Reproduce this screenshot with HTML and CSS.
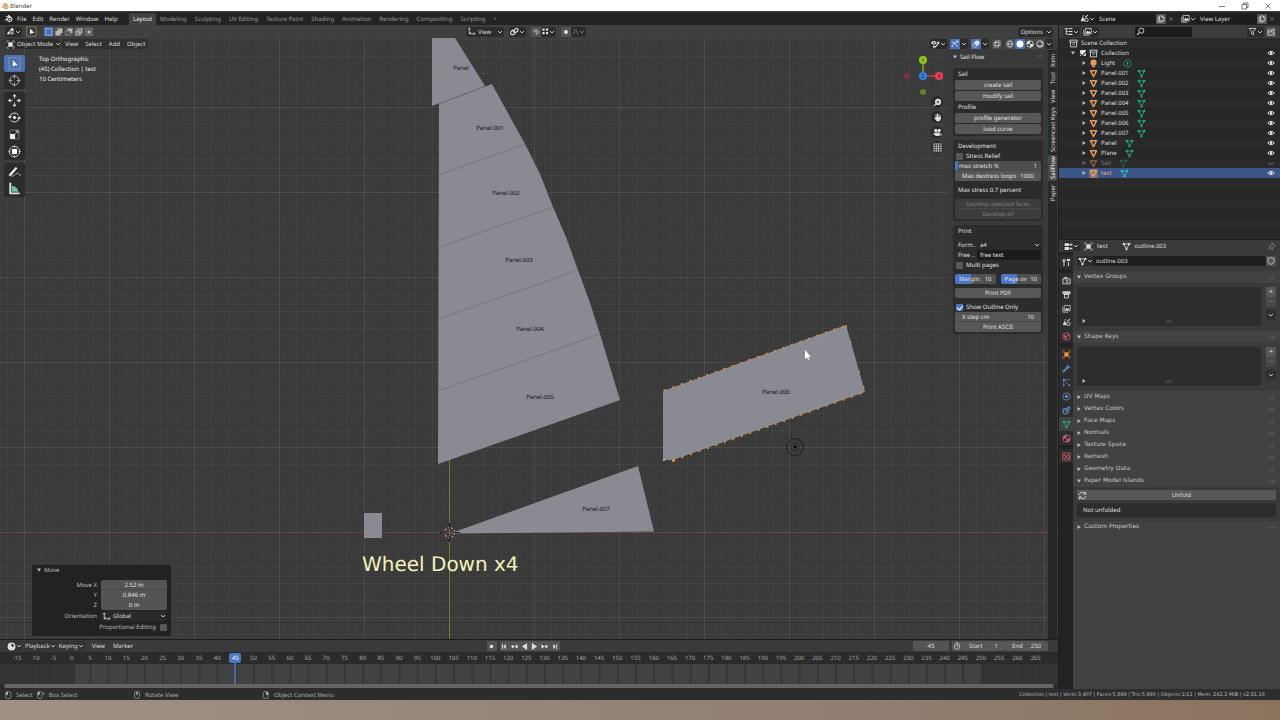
FILE: index.html
```html
<!DOCTYPE html>
<html lang="en">
<head>
<meta charset="utf-8">
<title>Blender</title>
<link rel="stylesheet" href="styles.css">
</head>
<body>
<svg class="defs" aria-hidden="true">
  <defs>
    <symbol id="blender" viewBox="0 0 16 16"><path d="M1 11 7.500 5.500H3V4h5L6.500 2.700 8 1.500l5.500 4.300C17 9 14.500 14 10 14c-3 0-5-2-5-4.200L2.500 12z" fill="currentColor"/><circle cx="10" cy="9.500" r="3" fill="var(--hole,#232323)"/><circle cx="10" cy="9.500" r="1.600" fill="var(--pupil,currentColor)"/></symbol>
    <symbol id="chev" viewBox="0 0 8 8"><path d="m1.500 2.800 2.500 2.500 2.500-2.500" fill="none" stroke="currentColor" stroke-width="1.200"/></symbol>
    <symbol id="down" viewBox="0 0 8 8"><path d="M0 1h8L4 7.500z" fill="currentColor"/></symbol>
    <symbol id="right" viewBox="0 0 8 8"><path d="M1 0v8l6.500-4z" fill="currentColor"/></symbol>
    <symbol id="mesh" viewBox="0 0 16 16"><g fill="none" stroke="currentColor" stroke-width="1.500"><path d="M3 3.500h10L8 12.500z"/></g><g fill="currentColor"><circle cx="3" cy="3.500" r="2"/><circle cx="13" cy="3.500" r="2"/><circle cx="8" cy="13" r="2"/></g></symbol>
    <symbol id="tri" viewBox="0 0 16 16"><path d="M2.500 3h11L8 13.500z" fill="none" stroke="currentColor" stroke-width="2.600" stroke-linejoin="round"/></symbol>
    <symbol id="bulb" viewBox="0 0 16 16"><circle cx="8" cy="6.500" r="5.500" fill="currentColor"/><path d="M5.500 12h5v2.500h-5z" fill="currentColor"/></symbol>
    <symbol id="point" viewBox="0 0 16 16"><circle cx="8" cy="8" r="6.500" fill="none" stroke="currentColor" stroke-width="1.500" stroke-dasharray="4 1"/><circle cx="8" cy="8" r="1.800" fill="currentColor"/><path d="M8 4v8" stroke="currentColor"/></symbol>
    <symbol id="box" viewBox="0 0 16 16"><path d="M1.500 2h13v3.500h-13zM2.500 5.500V14h11V5.500M6 9h4" fill="none" stroke="currentColor" stroke-width="1.500"/></symbol>
    <symbol id="eye" viewBox="0 0 16 16"><path d="M1.500 8Q8 1 14.500 8 8 15 1.500 8z" fill="none" stroke="currentColor" stroke-width="2"/><circle cx="8" cy="8" r="2.500" fill="currentColor"/></symbol>
    <symbol id="lid" viewBox="0 0 16 16"><path d="M2 7q6 6 12 0M4 9l-1 2M8 10v2M12 9l1 2" fill="none" stroke="currentColor" stroke-width="1.300"/></symbol>
    <symbol id="object" viewBox="0 0 16 16"><path d="M4 4h8v8H4z" fill="currentColor"/><path d="M1.500 5V1.500H5M11 1.500h3.500V5M14.500 11v3.500H11M5 14.500H1.500V11" fill="none" stroke="currentColor"/></symbol>
    <symbol id="view3d" viewBox="0 0 16 16"><path d="M2 12h12M5 12l3-8M11 13l2-5M4 9h8" stroke="currentColor" stroke-width="1.300" fill="none"/><circle cx="11" cy="4.500" r="2.800" fill="currentColor"/><circle cx="4.500" cy="11" r="2" fill="currentColor"/></symbol>
    <symbol id="selbox" viewBox="0 0 16 16"><path d="M1 1h14v14H1z" fill="none" stroke="#c9a052" stroke-width="1.100" stroke-dasharray="2 1.200"/><path d="M6 4v8l2.200-2H12z" fill="#fff"/></symbol>
    <symbol id="copy" viewBox="0 0 16 16"><path d="M5 2h6l3 3v7H5zM11 2v3.500h3M5 4.500H2V14h8v-2" fill="none" stroke="currentColor" stroke-width="1.500"/></symbol>
    <symbol id="image" viewBox="0 0 16 16"><path d="M1.500 5v9.500H11M4 3v9h10.500V2.500H4z" fill="none" stroke="currentColor" stroke-width="1.400"/><path d="m5 11 3-5 2.500 3 1.500-2 2 4z" fill="currentColor"/></symbol>
    <symbol id="scene" viewBox="0 0 16 16"><path d="M5 4l4 9H1z" fill="currentColor"/><circle cx="11.500" cy="10.500" r="3" fill="none" stroke="currentColor" stroke-width="1.500"/><path d="M9 6l5-4M5 3h2" stroke="currentColor" stroke-width="2"/></symbol>
    <symbol id="x" viewBox="0 0 16 16"><path d="m3 3 10 10M13 3 3 13" stroke="currentColor" stroke-width="2"/></symbol>
    <symbol id="axes" viewBox="0 0 16 16"><path d="M4 2v10h10M4 12l3-3M2 4l2-2.500L6 4M12 10l2.500 2L12 14" fill="none" stroke="currentColor" stroke-width="1.400"/></symbol>
    <symbol id="link" viewBox="0 0 16 16"><path d="m5 8 5-5q3-2 4 1t-2 4l-5 5q-3 2-5 0t0-5l4-3" fill="none" stroke="currentColor" stroke-width="2"/><circle cx="7.500" cy="8.500" r="2" fill="currentColor"/></symbol>
    <symbol id="magnet" viewBox="0 0 16 16"><path d="M3 6Q8 0 12 5t-4 8M5 8q3-3 5-1t-3 4M2.500 5l3 3.500" fill="none" stroke="currentColor" stroke-width="1.200"/></symbol>
    <symbol id="dots4" viewBox="0 0 16 16"><path d="M1 1h5v5H1zM9 1h5v5H9zM1 9h5v5H1zM9 9h5v5H9z" fill="currentColor"/></symbol>
    <symbol id="dot" viewBox="0 0 16 16"><circle cx="8" cy="8" r="4" fill="currentColor"/></symbol>
    <symbol id="curve" viewBox="0 0 16 16"><path d="M1 14q4 0 5-8 2-8 4 0 1 8 5 8" fill="none" stroke="currentColor" stroke-width="1.500"/></symbol>
    <symbol id="gizmo" viewBox="0 0 16 16"><path d="M2 14Q4 5 14 2M2 4q8 1 11 10M10 2h4v4" fill="none" stroke="currentColor" stroke-width="1.600"/></symbol>
    <symbol id="overlay" viewBox="0 0 16 16"><circle cx="10" cy="6" r="5" fill="currentColor"/><circle cx="6" cy="10" r="4.700" fill="none" stroke="currentColor" stroke-width="1.400"/></symbol>
    <symbol id="xray" viewBox="0 0 16 16"><path d="M2 5h9v9H2zM5 2h9v9H5z" fill="none" stroke="currentColor" stroke-width="1.300"/></symbol>
    <symbol id="globe" viewBox="0 0 16 16"><g fill="none" stroke="currentColor" stroke-width="1.200"><circle cx="8" cy="8" r="6.500"/><ellipse cx="8" cy="8" rx="3" ry="6.500"/><path d="M1.500 8h13"/></g></symbol>
    <symbol id="ball" viewBox="0 0 16 16"><circle cx="8" cy="8" r="7" fill="#fff"/></symbol>
    <symbol id="matball" viewBox="0 0 16 16"><circle cx="8" cy="8" r="6.500" fill="none" stroke="currentColor" stroke-width="1.600"/><path d="M8 1.500A6.500 6.500 0 0 0 1.500 8H8zM8 8v6.500A6.500 6.500 0 0 0 14.500 8z" fill="currentColor"/></symbol>
    <symbol id="rendball" viewBox="0 0 16 16"><circle cx="8" cy="8" r="6.500" fill="none" stroke="currentColor" stroke-width="1.600"/><path d="M9 3q4 1 4 5M3 11q5 4 10-1" fill="none" stroke="currentColor" stroke-width="2"/></symbol>
    <symbol id="visib" viewBox="0 0 16 16"><path d="M1 5q4-4 8 0-4 4-8 0zM7 13l7-8" fill="none" stroke="currentColor" stroke-width="2"/><circle cx="13" cy="4.500" r="2" fill="currentColor"/><path d="M4 9v6l4-3z" fill="currentColor"/></symbol>
    <symbol id="tree" viewBox="0 0 16 16"><path d="M1 3h6M4 3v10M4 8h3M4 13h3" stroke="currentColor" fill="none" stroke-width="1.600"/><path d="M8 2h7v2H8zM8 7h7v2H8zM8 12h7v2H8z" fill="currentColor"/></symbol>
    <symbol id="search" viewBox="0 0 16 16"><circle cx="9.500" cy="6.500" r="4.500" fill="none" stroke="currentColor" stroke-width="1.600"/><path d="m6 10-4 4" stroke="currentColor" stroke-width="2"/></symbol>
    <symbol id="funnel" viewBox="0 0 16 16"><path d="M2 2.500h12L9.500 8v6l-3-2V8z" fill="none" stroke="currentColor" stroke-width="1.500"/></symbol>
    <symbol id="newcol" viewBox="0 0 16 16"><path d="M2 4h7v4h5v6H2zM2 8h6" fill="none" stroke="currentColor" stroke-width="1.500"/><path d="M13 1v5M10.500 3.500h5" stroke="currentColor" stroke-width="1.500"/></symbol>
    <symbol id="cross3d" viewBox="0 0 20 20"><circle cx="10" cy="10" r="7" fill="none" stroke="#eee" stroke-width="1.200" stroke-dasharray="4 1.500"/><circle cx="10" cy="10" r="7" fill="none" stroke="#c66" stroke-width="1.200" stroke-dasharray="1.500 4" stroke-dashoffset="-4"/><path d="M10 1v6M10 13v6M1 10h6M13 10h6" stroke="#ddd"/></symbol>
    <symbol id="move" viewBox="0 0 20 20"><path d="M10 0l3 4H7zM10 20l3-4H7zM0 10l4 3V7zM20 10l-4 3V7z" fill="#eee"/><path d="M10 4v3M10 13v3M4 10h3M13 10h3" stroke="#eee" stroke-width="1.200"/></symbol>
    <symbol id="rotate" viewBox="0 0 20 20"><path d="M3 8a7.500 7.500 0 0 1 13-2M17 12a7.500 7.500 0 0 1-13 2" fill="none" stroke="#eee" stroke-width="1.400"/><path d="M0 8h6l-3 4zM14 12h6l-3-4zM10 7l3 3-3 3-3-3z" fill="#eee"/></symbol>
    <symbol id="scale" viewBox="0 0 20 20"><path d="M2 2h16v16H2z" fill="none" stroke="#aaa"/><path d="M2 9h9v9H2z" fill="#eee"/><path d="m11 9 5-5M12 3.500h4.500V8" stroke="#eee" fill="none" stroke-width="1.300"/></symbol>
    <symbol id="transform" viewBox="0 0 20 20"><circle cx="10" cy="10" r="8" fill="none" stroke="#ddd" stroke-width="1.500" stroke-dasharray="5 1.300"/><path d="M6 6h8v8H6z" fill="#fff"/><path d="M10 0v4M10 16v4M0 10h4M16 10h4" stroke="#ddd"/></symbol>
    <symbol id="annotate" viewBox="0 0 20 20"><path d="M2 14 12 3l2.500 2L5 16l-4 1z" fill="#eee"/><path d="M4 17q5 1 8-3t4 0l4 2" fill="none" stroke="#8fb7ad" stroke-width="1.400"/></symbol>
    <symbol id="measure" viewBox="0 0 20 20"><path d="M2 1h3v15h13v3H2z" fill="#ddd"/><path d="M6 6q9 1 10 9H6z" fill="#73bda5"/></symbol>
    <symbol id="zoomin" viewBox="0 0 16 16"><circle cx="9" cy="7" r="5.500" fill="#ddd"/><path d="m5 11-4 3" stroke="#ddd" stroke-width="2"/><path d="M9 4.500v5M6.500 7h5" stroke="#222" stroke-width="1.200"/></symbol>
    <symbol id="hand" viewBox="0 0 16 16"><path d="M5.500 8V3M8 8V1.500M10.500 8V3M13 9V5" stroke="#ddd" stroke-width="1.700" stroke-linecap="round"/><path d="M4.500 7H14v3q-1 5-5 5-3 0-7-6l1-1 2 1.500z" fill="#ddd"/></symbol>
    <symbol id="camera" viewBox="0 0 16 16"><circle cx="5" cy="4.500" r="3" fill="#ddd"/><circle cx="11" cy="4.500" r="3" fill="#ddd"/><path d="M4 8h8v6H4zM12 11l3-2v5zM1 9h3v3H1z" fill="#ddd"/></symbol>
    <symbol id="grid" viewBox="0 0 16 16"><path d="M1.500 1.500h13v13h-13zM6 1.500v13M10 1.500v13M1.500 6h13M1.500 10h13" fill="none" stroke="#ddd" stroke-width="1.200"/></symbol>
    <symbol id="props" viewBox="0 0 16 16"><path d="M1 2h8v5H1zM1 9h8v5H1z" fill="currentColor"/><path d="M10 4.500h5M10 11.500h5" stroke="currentColor" stroke-width="3"/></symbol>
    <symbol id="pin" viewBox="0 0 16 16"><path d="m9 1.500 5.500 5.500-2 .5-3 3v2.500L4 7.500h2.500l3-3zM6 10l-4.500 4.500" fill="none" stroke="currentColor" stroke-width="1.200"/></symbol>
    <symbol id="shield" viewBox="0 0 16 16"><path d="M8 1.500 14 3v5q0 4-6 7-6-3-6-7V3z" fill="none" stroke="currentColor" stroke-width="1.300"/></symbol>
    <symbol id="tools" viewBox="0 0 16 16"><path d="M3.500 6v8M2 2v3.500h3V2M11.500 7v7" stroke="currentColor" stroke-width="2" fill="none"/><path d="M8.500 1.500h6v4h-6z" fill="currentColor"/></symbol>
    <symbol id="render" viewBox="0 0 16 16"><path d="M1.500 5h13v9h-13zM4 5V2.500h5V5" fill="none" stroke="currentColor" stroke-width="1.700"/><circle cx="9" cy="9.500" r="2.300" fill="none" stroke="currentColor" stroke-width="1.500"/></symbol>
    <symbol id="output" viewBox="0 0 16 16"><path d="M1 2h14v5h-2v2H3V7H1z" fill="currentColor"/><path d="M4.500 8v6h7V8" fill="none" stroke="currentColor" stroke-width="1.700"/></symbol>
    <symbol id="world" viewBox="0 0 16 16"><circle cx="8" cy="8" r="6.500" fill="none" stroke="currentColor" stroke-width="1.500"/><path d="M3 5l4 1 2 3-2 4-3-3zM9 3l4 2-1 4-2-3z" fill="currentColor"/></symbol>
    <symbol id="wrench" viewBox="0 0 16 16"><path d="m2.500 13.500 7-7" stroke="currentColor" stroke-width="3.200" stroke-linecap="round"/><path d="M8 7V3.500L10.500 1 12 1.500 10.500 4 12 5.500 14.500 4l.5 1.500L12.500 8z" fill="currentColor"/></symbol>
    <symbol id="particles" viewBox="0 0 16 16"><circle cx="3" cy="3" r="2" fill="currentColor"/><path d="M3 3v11M3 3h11M3 3l10 10" stroke="currentColor" stroke-width="1.300"/><circle cx="13" cy="13" r="1.800" fill="currentColor"/><circle cx="3" cy="13" r="1.500" fill="currentColor"/></symbol>
    <symbol id="physics" viewBox="0 0 16 16"><circle cx="8" cy="8" r="6.500" fill="none" stroke="currentColor" stroke-width="1.400"/><circle cx="8" cy="8" r="3" fill="currentColor"/></symbol>
    <symbol id="constraint" viewBox="0 0 16 16"><circle cx="6.500" cy="9.500" r="4.800" fill="none" stroke="currentColor" stroke-width="2"/><circle cx="7" cy="9" r="2" fill="currentColor"/><path d="M8 5l5-4 1.500 3-3 4" fill="none" stroke="currentColor" stroke-width="1.800"/></symbol>
    <symbol id="texture" viewBox="0 0 16 16"><path d="M1.500 1.500h13v13h-13z" fill="none" stroke="currentColor" stroke-width="1.500"/><path d="M3 4h3v3H3zM9 4h3v3H9zM6 7h3v3H6zM12 7h2v3h-2zM3 10h3v3H3zM9 10h3v3H9z" fill="currentColor"/></symbol>
    <symbol id="refresh" viewBox="0 0 16 16"><path d="M2 7a6 6 0 0 1 11-2M14 9a6 6 0 0 1-11 2M13.500 1v4.500H9M2.500 15v-4.500H7" fill="none" stroke="currentColor" stroke-width="1.500"/></symbol>
    <symbol id="clock" viewBox="0 0 16 16"><circle cx="8" cy="8" r="7" fill="currentColor"/><path d="M8 3v5.500h4A4.500 4.500 0 0 0 8 3z" fill="#333"/></symbol>
    <symbol id="stopwatch" viewBox="0 0 16 16"><circle cx="8" cy="9" r="5.500" fill="none" stroke="currentColor" stroke-width="1.400"/><path d="M8 5.500V9h3M6 1.500h4M13 2.500l1.500 1.500" stroke="currentColor" stroke-width="1.400" fill="none"/></symbol>
    <symbol id="first" viewBox="0 0 16 16"><path d="M2 2h2v12H2zM5 8l6-6v12z" fill="currentColor"/></symbol>
    <symbol id="prevkey" viewBox="0 0 16 16"><path d="m0 8 4-4 4 4-4 4zM8 8l7-5v10z" fill="currentColor"/></symbol>
    <symbol id="playb" viewBox="0 0 16 16"><path d="m2 8 12-8v16z" fill="currentColor"/></symbol>
    <symbol id="mouse" viewBox="0 0 16 16"><rect x="3.500" y="1" width="10" height="14" rx="3.500" fill="none" stroke="currentColor" stroke-width="1.300"/><path d="M4 2h4v6H4z" fill="currentColor"/></symbol>
    <symbol id="mousedrag" viewBox="0 0 16 16"><rect x="1" y="1" width="9" height="14" rx="3.500" fill="none" stroke="currentColor" stroke-width="1.300"/><path d="M1.500 2h4v6h-4z" fill="currentColor"/><path d="M12 2q3 2 1.500 6" fill="none" stroke="currentColor" stroke-width="1.500"/></symbol>
    <symbol id="mousem" viewBox="0 0 16 16"><rect x="3" y="1" width="10" height="14" rx="3.500" fill="none" stroke="currentColor" stroke-width="1.300"/><path d="M6.500 2h3v6h-3z" fill="currentColor"/></symbol>
    <symbol id="grip" viewBox="0 0 8 4"><path d="M0 1h8M0 3h8" stroke="currentColor" stroke-dasharray="1.500 .5"/></symbol>
    <symbol id="mode1" viewBox="0 0 16 16"><path d="M1.500 1.500h13v13h-13z" fill="none" stroke="currentColor" stroke-width="1.400" stroke-dasharray="2 1"/></symbol>
    <symbol id="mode2" viewBox="0 0 16 16"><path d="M5 1h10v9h-4v5H1V6h4z" fill="currentColor"/></symbol>
    <symbol id="mode3" viewBox="0 0 16 16"><path d="M5 1h10v9h-4V6H5z" fill="currentColor"/><path d="M1.500 6.500h9v8h-9z" fill="none" stroke="currentColor" stroke-dasharray="2 1"/></symbol>
    <symbol id="mode4" viewBox="0 0 16 16"><path d="M6 2h8v8h-4V6H6zM2 6h4v4h4v4H2z" fill="none" stroke="currentColor" stroke-width="2.200"/></symbol>
    <symbol id="mode5" viewBox="0 0 16 16"><path d="M1.500 1.500h13v13h-13z" fill="none" stroke="currentColor" stroke-dasharray="2 1.500"/><path d="M5 5h6v6H5z" fill="currentColor"/></symbol>
  </defs>
</svg>

<header class="titlebar">
  <svg class="ic orange"><use href="#blender"/></svg><span class="title">Blender</span>
  <div class="winbtns">
    <button aria-label="Minimize"><svg viewBox="0 0 8 8"><path d="M1 4.500h6"/></svg></button>
    <button aria-label="Restore"><svg viewBox="0 0 8 8"><path d="M1 2.500h4.500V7H1zM2.500 2.500V1H7v4.500H5.500"/></svg></button>
    <button aria-label="Close"><svg viewBox="0 0 8 8"><path d="m1.500 1.500 5 5M6.500 1.500l-5 5"/></svg></button>
  </div>
</header>

<nav class="topbar">
  <div class="menus">
    <svg class="ic"><use href="#blender"/></svg>
    <button>File</button><button>Edit</button><button>Render</button><button>Window</button><button>Help</button>
  </div>
  <div class="workspaces">
    <button class="active">Layout</button><button>Modeling</button><button>Sculpting</button><button>UV Editing</button><button>Texture Paint</button><button>Shading</button><button>Animation</button><button>Rendering</button><button>Compositing</button><button>Scripting</button><button>+</button>
  </div>
  <div class="sceneboxes">
    <button class="pick" aria-label="Browse scene"><svg class="ic"><use href="#scene"/></svg><svg class="cv"><use href="#chev"/></svg></button>
    <input aria-label="Scene" value="Scene">
    <button class="tiny" aria-label="New scene"><svg class="ic"><use href="#copy"/></svg></button>
    <button class="del" aria-label="Delete scene"><svg class="cv"><use href="#x"/></svg></button>
    <button class="pick second" aria-label="Browse view layer"><svg class="ic"><use href="#image"/></svg><svg class="cv"><use href="#chev"/></svg></button>
    <input aria-label="View layer" value="View Layer">
    <button class="tiny" aria-label="New view layer"><svg class="ic"><use href="#copy"/></svg></button>
    <button class="del" aria-label="Delete view layer"><svg class="cv"><use href="#x"/></svg></button>
  </div>
</nav>

<main class="workspace">
  <section class="left">
    <div class="toolsettings">
      <div class="grp">
        <button class="pick" aria-label="Editor type"><svg class="ic"><use href="#view3d"/></svg><svg class="cv"><use href="#chev"/></svg></button>
        <button class="plain" aria-label="Active tool"><svg class="ic big"><use href="#selbox"/></svg></button>
        <div class="modes">
          <button class="on" aria-label="Set"><svg><use href="#mode1"/></svg></button><button aria-label="Extend"><svg><use href="#mode2"/></svg></button><button aria-label="Subtract"><svg><use href="#mode3"/></svg></button><button aria-label="Invert"><svg><use href="#mode4"/></svg></button><button aria-label="Intersect"><svg><use href="#mode5"/></svg></button>
        </div>
      </div>
      <div class="grp mid">
        <button class="pick wide"><svg class="ic"><use href="#axes"/></svg><span>View</span><svg class="cv"><use href="#chev"/></svg></button>
        <button class="pick" aria-label="Pivot"><svg class="ic"><use href="#link"/></svg><svg class="cv"><use href="#chev"/></svg></button>
        <div class="pair"><button class="tiny" aria-label="Snap"><svg class="ic"><use href="#magnet"/></svg></button><button class="pick" aria-label="Snap to"><svg class="sm"><use href="#dots4"/></svg><svg class="cv"><use href="#chev"/></svg></button></div>
        <div class="pair"><button class="tiny" aria-label="Proportional"><svg class="ic"><use href="#dot"/></svg></button><button class="pick dim" aria-label="Falloff"><svg class="sm"><use href="#curve"/></svg><svg class="cv"><use href="#chev"/></svg></button></div>
      </div>
      <button class="pick options"><span>Options</span><svg class="cv"><use href="#chev"/></svg></button>
    </div>

    <div class="viewport">
      <svg class="canvas" role="img" aria-label="Sail panels">
        <defs>
          <pattern id="fine" x="449" y="532" width="17" height="17" patternUnits="userSpaceOnUse"><path d="M3.500 0v17M7 0v17M10.500 0v17M14 0v17M0 3.500h17M0 7h17M0 10.500h17M0 14h17" stroke="#fff" stroke-opacity=".016"/><path d="M.5 0v17M0 .5h17" stroke="#fff" stroke-opacity=".045"/></pattern>
          <pattern id="major" x="449" y="532" width="85" height="85" patternUnits="userSpaceOnUse"><path d="M.5 0v85M0 .5h85" stroke="#fff" stroke-opacity=".045"/></pattern>
        </defs>
        <g transform="translate(0 -38)">
          <rect y="38" width="4000" height="3000" fill="url(#fine)"/>
          <rect y="38" width="4000" height="3000" fill="url(#major)"/>
          <path d="M0 532.500h4000" stroke="#733f49"/>
          <path d="M449.500 38v2000" stroke="#717d2b"/>
          <g fill="#8a8a93">
            <path d="M439 104 492 84 509 115 525 144 540 174 553 207 566 237 578 270 590 303 600 334 620 400 438 464z"/>
            <path d="M432 30h18l5 8 30 48-53 20z"/>
            <path d="M663 391 846 325 865 392 673 460h-10zM450 533.500 638 466l16 65.500zM364 513h18v25h-18z"/>
          </g>
          <path d="M439 104 485 86M439 175l86-31M440 247l113-40M439 319l139-49M438 391l162-57" stroke="#74747c" stroke-width=".9" fill="none"/>
          <path d="M664 390.500 846 325.500M673 460.500 865 392" stroke="#d98d35" stroke-width="2" stroke-dasharray="2 7" fill="none"/>
          <path d="M846 325.500 865 392" stroke="#d98d35" stroke-width="1.500" stroke-dasharray="2 14 2 29" fill="none"/>
          <path d="M663 460h2M672 460.500h3" stroke="#e8a040" stroke-width="2"/>
          <g class="lbl">
            <text x="461" y="70">Panel</text><text x="490" y="130">Panel.001</text><text x="506" y="195">Panel.002</text><text x="519" y="262">Panel.003</text><text x="530" y="331">Panel.004</text><text x="540" y="399">Panel.005</text><text x="776" y="394">Panel.006</text><text x="596" y="511">Panel.007</text>
          </g>
          <circle cx="795" cy="447" r="8.500" fill="none" stroke="#151515" stroke-width=".8"/><circle cx="795" cy="447" r="4" fill="none" stroke="#151515" stroke-width=".7" stroke-dasharray="1.500 1"/><circle cx="795" cy="447" r="1.500"/>
          <circle cx="449.500" cy="532.500" r="5" fill="none" stroke="#d9888c" stroke-width="1.200" stroke-dasharray="2 1.500"/><path d="M440 532.500h6M453 532.500h7M449.500 523v6M449.500 536v6" stroke="#222"/>
          <path d="M805 350v9l2-1.800 1.200 2.600 1.200-.6-1.200-2.500h2.500z" fill="#fff"/>
          <text class="caption" x="362" y="571">Wheel Down x4</text>
          <g>
            <path d="M923 75V60" stroke="#7ea32c" stroke-width="1.500"/><path d="M923 76h16" stroke="#c9384f" stroke-width="1.500"/>
            <circle cx="923" cy="60" r="4" fill="#8cc81e"/><circle cx="939" cy="76" r="4" fill="#f03a56"/><circle cx="907" cy="76" r="3" fill="#7c334a"/><circle cx="923" cy="92" r="3" fill="#64802a"/><circle cx="923" cy="76" r="4" fill="#2f83e3"/>
            <g class="ax"><text x="923" y="62">Y</text><text x="939" y="78">X</text><text x="923" y="78">Z</text></g>
          </g>
        </g>
      </svg>

      <div class="viewhead">
        <div class="grp">
          <button class="pick mode"><svg class="ic"><use href="#object"/></svg><span>Object Mode</span><svg class="cv"><use href="#chev"/></svg></button>
          <div class="textmenu"><button>View</button><button>Select</button><button>Add</button><button>Object</button></div>
        </div>
        <div class="grp shade">
          <button class="pick" aria-label="Visibility"><svg class="ic"><use href="#visib"/></svg><svg class="cv"><use href="#chev"/></svg></button>
          <div class="pair"><button class="tiny blue" aria-label="Gizmos"><svg class="ic"><use href="#gizmo"/></svg></button><button class="pick" aria-label="Gizmo options"><svg class="cv"><use href="#chev"/></svg></button></div>
          <div class="pair"><button class="tiny blue" aria-label="Overlays"><svg class="ic"><use href="#overlay"/></svg></button><button class="pick" aria-label="Overlay options"><svg class="cv"><use href="#chev"/></svg></button></div>
          <button class="tiny dark" aria-label="X-ray"><svg class="ic"><use href="#xray"/></svg></button>
          <div class="pair"><button class="tiny" aria-label="Wireframe"><svg class="ic"><use href="#globe"/></svg></button><button class="tiny blue" aria-label="Solid"><svg class="ic"><use href="#ball"/></svg></button><button class="tiny" aria-label="Material"><svg class="ic"><use href="#matball"/></svg></button><button class="tiny" aria-label="Rendered"><svg class="ic"><use href="#rendball"/></svg></button><button class="pick" aria-label="Shading options"><svg class="cv"><use href="#chev"/></svg></button></div>
        </div>
      </div>

      <div class="toolbar">
        <div><button class="on" aria-label="Select box"><svg><use href="#selbox"/></svg></button><button aria-label="Cursor"><svg><use href="#cross3d"/></svg></button></div>
        <div><button aria-label="Move"><svg><use href="#move"/></svg></button><button aria-label="Rotate"><svg><use href="#rotate"/></svg></button><button aria-label="Scale"><svg class="small"><use href="#scale"/></svg></button><button aria-label="Transform"><svg><use href="#transform"/></svg></button></div>
        <div><button aria-label="Annotate"><svg><use href="#annotate"/></svg></button><button aria-label="Measure"><svg><use href="#measure"/></svg></button></div>
      </div>

      <div class="info"><span>Top Orthographic</span><span>(45) Collection | test</span><span>10 Centimeters</span></div>

      <div class="navbtns"><button aria-label="Zoom"><svg><use href="#zoomin"/></svg></button><button aria-label="Pan"><svg><use href="#hand"/></svg></button><button aria-label="Camera"><svg><use href="#camera"/></svg></button><button aria-label="Grid"><svg><use href="#grid"/></svg></button></div>

      <form class="redo">
        <h2><svg class="arrow"><use href="#down"/></svg>Move</h2>
        <div class="fields">
          <label for="mx">Move X</label><input id="mx" class="num top" value="2.52 m">
          <label for="my">Y</label><input id="my" class="num" value="0.846 m">
          <label for="mz">Z</label><input id="mz" class="num bottom" value="0 m">
          <label for="or" class="gap">Orientation</label><div class="selwrap gap"><svg class="ic"><use href="#axes"/></svg><select id="or"><option>Global</option></select><svg class="cv"><use href="#chev"/></svg></div>
        </div>
        <label class="prop">Proportional Editing<input type="checkbox"></label>
      </form>

      <aside class="sidebar">
        <div class="npanel">
          <h2><svg class="arrow"><use href="#down"/></svg>Sail Flow<svg class="grip"><use href="#grip"/></svg></h2>
          <div class="card c1">
            <h3>Sail</h3><button class="btn">create sail</button><button class="btn">modify sail</button>
            <h3>Profile</h3><button class="btn">profile generator</button><button class="btn">load curve</button>
          </div>
          <div class="card c2">
            <div><h3>Development</h3><label class="chk"><input type="checkbox">Stress Relief</label>
              <div class="fld top fill1"><label for="ms">max stretch %</label><input id="ms" value="1"></div><div class="fld bottom in"><label for="md">Max destress loops</label><input id="md" value="1000"></div></div>
            <p>Max stress 0.7 percent</p>
            <div><button class="btn top" disabled>Develop selected faces</button><button class="btn bottom" disabled>Develop all</button></div>
          </div>
          <div class="card c2">
            <h3>Print</h3>
            <div>
              <div class="line"><label for="fo">Form..</label><div class="selwrap"><select id="fo"><option>a4</option></select><svg class="cv"><use href="#chev"/></svg></div></div>
              <div class="line"><label for="fr">Free ..</label><input id="fr" class="txt" value="free text"></div>
              <label class="chk"><input type="checkbox">Multi pages</label>
            </div>
            <div class="two"><div class="fld fill2"><label for="ma">Margin:</label><input id="ma" value="10"></div><div class="fld fill2"><label for="po">Page ov</label><input id="po" value="10"></div></div>
            <button class="btn">Print PDF</button>
            <div><label class="chk"><input type="checkbox" checked>Show Outline Only</label><div class="fld top in"><label for="xs">X step cm</label><input id="xs" value="10"></div><button class="btn bottom">Print ASCII</button></div>
          </div>
        </div>
        <div class="ntabs"><button class="s">Item</button><button class="s">Tool</button><button class="s">View</button><button class="l">Screencast Keys</button><button class="m on">SailFlow</button><button class="p">Paper</button></div>
      </aside>
    </div>

    <div class="timeline">
      <div class="tlhead">
        <div class="grp">
          <button class="pick" aria-label="Editor type"><svg class="ic"><use href="#clock"/></svg><svg class="cv"><use href="#chev"/></svg></button>
          <button class="pick"><span>Playback</span><svg class="cv"><use href="#chev"/></svg></button><button class="pick"><span>Keying</span><svg class="cv"><use href="#chev"/></svg></button>
          <div class="textmenu"><button>View</button><button>Marker</button></div>
        </div>
        <div class="grp play">
          <button class="tiny" aria-label="Record"><svg class="ic"><use href="#dot"/></svg></button>
          <div class="pair"><button class="tiny" aria-label="First"><svg><use href="#first"/></svg></button><button class="tiny" aria-label="Previous key"><svg><use href="#prevkey"/></svg></button><button class="tiny" aria-label="Play back"><svg><use href="#playb"/></svg></button><button class="tiny flip" aria-label="Play"><svg><use href="#playb"/></svg></button><button class="tiny flip" aria-label="Next key"><svg><use href="#prevkey"/></svg></button><button class="tiny flip" aria-label="Last"><svg><use href="#first"/></svg></button></div>
        </div>
        <div class="grp frames">
          <input class="num" aria-label="Current frame" value="45">
          <div class="pair"><button class="tiny" aria-label="Preview range"><svg class="ic"><use href="#stopwatch"/></svg></button><div class="fld in"><label for="st">Start</label><input id="st" value="1"></div><div class="fld in"><label for="en">End</label><input id="en" value="250"></div></div>
        </div>
      </div>
      <div class="tlbody">
        <div class="ruler"><span>-15</span><span>-10</span><span>-5</span><span>0</span><span>5</span><span>10</span><span>15</span><span>20</span><span>25</span><span>30</span><span>35</span><span>40</span><span>45</span><span>50</span><span>55</span><span>60</span><span>65</span><span>70</span><span>75</span><span>80</span><span>85</span><span>90</span><span>95</span><span>100</span><span>105</span><span>110</span><span>115</span><span>120</span><span>125</span><span>130</span><span>135</span><span>140</span><span>145</span><span>150</span><span>155</span><span>160</span><span>165</span><span>170</span><span>175</span><span>180</span><span>185</span><span>190</span><span>195</span><span>200</span><span>205</span><span>210</span><span>215</span><span>220</span><span>225</span><span>230</span><span>235</span><span>240</span><span>245</span><span>250</span><span>255</span><span>260</span><span>265</span></div>
        <div class="track"><div class="range" style="margin-left:6.49%;width:87.37%"></div><div class="ticks"></div><div class="playhead" style="left:21.93%"><b>45</b></div></div>
        <div class="hscroll"></div>
      </div>
    </div>
  </section>

  <section class="right">
    <div class="outliner">
      <div class="ohead">
        <button class="pick" aria-label="Editor type"><svg class="ic"><use href="#tree"/></svg><svg class="cv"><use href="#chev"/></svg></button>
        <button class="pick" aria-label="Display mode"><svg class="ic"><use href="#image"/></svg><svg class="cv"><use href="#chev"/></svg></button>
        <label class="find"><svg class="ic"><use href="#search"/></svg><input type="search" aria-label="Filter"></label>
        <button class="pick last" aria-label="Filter options"><svg class="ic"><use href="#funnel"/></svg><svg class="cv"><use href="#chev"/></svg></button>
        <button class="tiny" aria-label="New collection"><svg class="ic"><use href="#newcol"/></svg></button>
      </div>
      <ul class="tree">
        <li class="d0"><svg class="ic"><use href="#box"/></svg><span>Scene Collection</span></li>
        <li class="d1"><svg class="arrow"><use href="#down"/></svg><input type="checkbox" class="white" aria-label="Collection enabled" checked><svg class="ic"><use href="#box"/></svg><span>Collection</span><svg class="eye"><use href="#eye"/></svg></li>
        <li class="d2"><svg class="arrow"><use href="#right"/></svg><svg class="ic ob"><use href="#bulb"/></svg><span>Light</span><svg class="ic data"><use href="#point"/></svg><svg class="eye"><use href="#eye"/></svg></li>
        <li class="d2"><svg class="arrow"><use href="#right"/></svg><svg class="ic ob"><use href="#tri"/></svg><span>Panel.001</span><svg class="ic data"><use href="#mesh"/></svg><svg class="eye"><use href="#eye"/></svg></li>
        <li class="d2"><svg class="arrow"><use href="#right"/></svg><svg class="ic ob"><use href="#tri"/></svg><span>Panel.002</span><svg class="ic data"><use href="#mesh"/></svg><svg class="eye"><use href="#eye"/></svg></li>
        <li class="d2"><svg class="arrow"><use href="#right"/></svg><svg class="ic ob"><use href="#tri"/></svg><span>Panel.003</span><svg class="ic data"><use href="#mesh"/></svg><svg class="eye"><use href="#eye"/></svg></li>
        <li class="d2"><svg class="arrow"><use href="#right"/></svg><svg class="ic ob"><use href="#tri"/></svg><span>Panel.004</span><svg class="ic data"><use href="#mesh"/></svg><svg class="eye"><use href="#eye"/></svg></li>
        <li class="d2"><svg class="arrow"><use href="#right"/></svg><svg class="ic ob"><use href="#tri"/></svg><span>Panel.005</span><svg class="ic data"><use href="#mesh"/></svg><svg class="eye"><use href="#eye"/></svg></li>
        <li class="d2"><svg class="arrow"><use href="#right"/></svg><svg class="ic ob"><use href="#tri"/></svg><span>Panel.006</span><svg class="ic data"><use href="#mesh"/></svg><svg class="eye"><use href="#eye"/></svg></li>
        <li class="d2"><svg class="arrow"><use href="#right"/></svg><svg class="ic ob"><use href="#tri"/></svg><span>Panel.007</span><svg class="ic data"><use href="#mesh"/></svg><svg class="eye"><use href="#eye"/></svg></li>
        <li class="d2"><svg class="arrow"><use href="#right"/></svg><svg class="ic ob"><use href="#tri"/></svg><span>Panel</span><svg class="ic data"><use href="#mesh"/></svg><svg class="eye"><use href="#eye"/></svg></li>
        <li class="d2"><svg class="arrow"><use href="#right"/></svg><svg class="ic ob"><use href="#tri"/></svg><span>Plane</span><svg class="ic data"><use href="#mesh"/></svg><svg class="eye"><use href="#eye"/></svg></li>
        <li class="d2 off"><svg class="arrow"><use href="#right"/></svg><svg class="ic ob"><use href="#tri"/></svg><span>Sail</span><svg class="ic data"><use href="#mesh"/></svg><svg class="eye"><use href="#lid"/></svg></li>
        <li class="d2 sel"><svg class="arrow"><use href="#right"/></svg><svg class="ic ob"><use href="#tri"/></svg><span>test</span><svg class="ic data"><use href="#mesh"/></svg><svg class="eye"><use href="#eye"/></svg></li>
      </ul>
    </div>

    <div class="properties">
      <div class="phead">
        <button class="pick" aria-label="Editor type"><svg class="ic"><use href="#props"/></svg><svg class="cv"><use href="#chev"/></svg></button>
        <svg class="ic crumb1"><use href="#object"/></svg><span>test</span><svg class="ic crumb2"><use href="#mesh"/></svg><span>outline.003</span>
        <svg class="ic pin"><use href="#pin"/></svg>
      </div>
      <div class="pmain">
        <nav class="ptabs">
          <div><button aria-label="Tool"><svg><use href="#tools"/></svg></button></div>
          <div><button aria-label="Render"><svg><use href="#render"/></svg></button><button aria-label="Output"><svg><use href="#output"/></svg></button><button aria-label="View layer"><svg><use href="#image"/></svg></button><button aria-label="Scene"><svg><use href="#scene"/></svg></button><button class="red" aria-label="World"><svg><use href="#world"/></svg></button></div>
          <div><button class="or" aria-label="Object"><svg><use href="#object"/></svg></button><button class="bl" aria-label="Modifiers"><svg><use href="#wrench"/></svg></button><button class="bl" aria-label="Particles"><svg><use href="#particles"/></svg></button><button class="bl" aria-label="Physics"><svg><use href="#physics"/></svg></button><button class="bl" aria-label="Constraints"><svg><use href="#constraint"/></svg></button><button class="gr on" aria-label="Data"><svg><use href="#mesh"/></svg></button><button class="red" aria-label="Material"><svg><use href="#matball"/></svg></button></div>
          <div><button class="red" aria-label="Texture"><svg><use href="#texture"/></svg></button></div>
        </nav>
        <div class="pbody">
          <div class="namerow"><button class="pick" aria-label="Browse mesh"><svg class="ic"><use href="#mesh"/></svg><svg class="cv"><use href="#chev"/></svg></button><input aria-label="Mesh name" value="outline.003"><button class="tiny" aria-label="Fake user"><svg class="ic"><use href="#shield"/></svg></button></div>
          <h2><svg class="arrow"><use href="#down"/></svg>Vertex Groups<svg class="grip"><use href="#grip"/></svg></h2>
          <div class="listwrap"><div class="list"><svg class="arrow"><use href="#right"/></svg><svg class="grip"><use href="#grip"/></svg></div><div class="side"><button>+</button><button class="minus">−</button><button class="more" aria-label="More"><svg class="cv"><use href="#chev"/></svg></button></div></div>
          <h2><svg class="arrow"><use href="#down"/></svg>Shape Keys<svg class="grip"><use href="#grip"/></svg></h2>
          <div class="listwrap"><div class="list"><svg class="arrow"><use href="#right"/></svg><svg class="grip"><use href="#grip"/></svg></div><div class="side"><button>+</button><button class="minus">−</button><button class="more" aria-label="More"><svg class="cv"><use href="#chev"/></svg></button></div></div>
          <h2><svg class="arrow"><use href="#right"/></svg>UV Maps<svg class="grip"><use href="#grip"/></svg></h2>
          <h2><svg class="arrow"><use href="#right"/></svg>Vertex Colors<svg class="grip"><use href="#grip"/></svg></h2>
          <h2><svg class="arrow"><use href="#right"/></svg>Face Maps<svg class="grip"><use href="#grip"/></svg></h2>
          <h2><svg class="arrow"><use href="#right"/></svg>Normals<svg class="grip"><use href="#grip"/></svg></h2>
          <h2><svg class="arrow"><use href="#right"/></svg>Texture Space<svg class="grip"><use href="#grip"/></svg></h2>
          <h2><svg class="arrow"><use href="#right"/></svg>Remesh<svg class="grip"><use href="#grip"/></svg></h2>
          <h2><svg class="arrow"><use href="#right"/></svg>Geometry Data<svg class="grip"><use href="#grip"/></svg></h2>
          <h2><svg class="arrow"><use href="#down"/></svg>Paper Model Islands<svg class="grip"><use href="#grip"/></svg></h2>
          <div class="paper"><button class="unfold"><svg class="ic"><use href="#refresh"/></svg><span>Unfold</span></button><p>Not unfolded</p></div>
          <h2><svg class="arrow"><use href="#right"/></svg>Custom Properties<svg class="grip"><use href="#grip"/></svg></h2>
        </div>
      </div>
    </div>
  </section>
</main>

<footer class="status">
  <div class="hints"><span><svg class="ic"><use href="#mouse"/></svg>Select</span><span><svg class="ic"><use href="#mousedrag"/></svg>Box Select</span></div>
  <div class="hints"><span><svg class="ic"><use href="#mousem"/></svg>Rotate View</span></div>
  <div class="hints"><span><svg class="ic flipx"><use href="#mouse"/></svg>Object Context Menu</span></div>
  <div class="stats">Collection | test | Verts:3,407 | Faces:5,889 | Tris:5,890 | Objects:1/11 | Mem: 242.2 MiB | v2.81.16</div>
</footer>
<div class="wallpaper"></div>
</body>
</html>
```

FILE: styles.css
```css
*{box-sizing:border-box}
body{margin:0;height:100vh;display:flex;flex-direction:column;overflow:hidden;background:#222;color:#dedede;font:6px/10px "Noto Sans","DejaVu Sans",sans-serif;text-rendering:geometricPrecision}
.defs{position:absolute;width:0;height:0}
button,input,select{font:inherit;text-rendering:inherit;color:inherit;border:0;margin:0;padding:0;background:none;min-width:0;border-radius:0}
button{display:flex;align-items:center;justify-content:center;white-space:nowrap}
h2,h3,p,ul{margin:0;padding:0;font:inherit}
svg{display:block;flex:none}
input[type=checkbox]{appearance:none;width:7px;height:7px;background:#595959;border-radius:1px;flex:none;display:flex;justify-content:center}
input[type=checkbox]:checked{background:#4a76c4}
input[type=checkbox]:checked::before{content:"";width:3px;height:5px;border:solid #fff;border-width:0 1px 1px 0;transform:rotate(40deg)}
input[type=checkbox].white{background:#e4e4e4;width:6px;height:6px}
input[type=checkbox].white::before{border-color:#222}
input[type=search]{appearance:none}
select{appearance:none}
.ic{width:9px;height:9px}
.big{width:11px;height:11px}
.sm{width:7px;height:7px}
.cv{width:6px;height:6px}
.arrow{width:4px;height:4px;color:#bbb}
.grip{width:6px;height:3px;color:#666;margin-left:auto}

.titlebar{height:11px;background:#fff;color:#444;display:flex;align-items:center;padding:0 8px 0 1px;flex:none}
.titlebar .orange{color:#e48b35;width:8px;height:8px;--hole:#fff;--pupil:#356c9e}
.title{margin-left:1px}
.winbtns{margin-left:auto;display:flex;gap:15px}
.winbtns svg{width:8px;height:8px;fill:none;stroke:#555;stroke-width:.8}

.topbar{height:14px;background:#232323;display:flex;align-items:center;border-top:1px solid #444;flex:none}
.menus{display:flex;align-items:center;gap:4px;width:129px;padding-left:4px}
.menus svg{margin-right:-1px}
.menus button{padding:0 1px;height:8px}
.workspaces{display:flex;align-self:stretch;align-items:flex-end;color:#9a9a9a}
.workspaces button{height:12px;padding:0 4px}
.workspaces .active{background:#424242;color:#f0f0f0;border-radius:2px 2px 0 0}
.sceneboxes{margin-left:auto;display:flex;align-items:center;padding-right:4px;height:11px}
.sceneboxes input{width:60px;height:10px;padding-left:3px;background:#1d1d1d}
.second{margin-left:5px}
.del{width:9px;color:#777}

.pick{height:10px;background:#2c2c2c;border-radius:2px;padding:0 1px;justify-content:flex-start}
.sceneboxes .pick{background:none}
.tiny{width:10px;height:10px;background:#545454}
.tiny svg{width:8px;height:8px}
.blue{background:#4a72ba}
.dark{background:#333}
.pair{display:flex}
.grp{display:flex;align-items:center}

.workspace{flex:1;min-height:0;display:grid;grid-template-columns:minmax(0,1fr) 221px;gap:1px;background:#1c1c1c}
.left{display:flex;flex-direction:column;gap:1px;min-width:0;min-height:0}
.toolsettings{height:13px;background:#404040;display:grid;grid-template-columns:1fr auto 1fr;align-items:center;padding:0 5px;flex:none}
.toolsettings .options{justify-self:end;gap:3px;padding-left:3px}
.plain{margin:0 7px 0 4px}
.modes{display:flex;gap:1px;color:#b8b8b8}
.modes button{width:9px;height:9px;background:#555}
.modes svg{width:8px;height:8px}
.modes .on{background:#4a72ba;color:#dbe7ff}
.mid{gap:5px;margin-right:6px}
.wide{width:38px;gap:2px}
.wide .cv{margin-left:auto}
.dim{color:#888}

.viewport{position:relative;flex:1;min-height:0;background:#393939;overflow:hidden;margin-top:-1px}
.canvas{position:absolute;inset:0;width:100%;height:100%}
.lbl,.ax{font:6px "Noto Sans",sans-serif;text-anchor:middle;fill:#111}
.ax{font-size:5px}
.caption{font:20px "DejaVu Sans",sans-serif;fill:#f3f3ba}
.viewhead{position:absolute;left:0;right:0;top:0;height:12px;padding:1px 5px;display:flex;justify-content:space-between;align-items:center}
.mode{width:54px;gap:2px;margin-right:3px}
.mode .cv{margin-left:auto}
.textmenu{display:flex;gap:2px}
.textmenu button{padding:0 3px}
.viewhead .textmenu{background:#303030;gap:1px}
.shade{gap:3px}
.shade .tiny:not(.blue){background:#484848}
.toolbar{position:absolute;left:4px;top:17px;display:flex;flex-direction:column;gap:3px}
.toolbar div{background:#2b2b2b;border-radius:2px}
.toolbar button{width:21px;height:17px;border-radius:2px}
.toolbar .on{background:#4a72ba}
.toolbar svg{width:13px;height:13px}
.toolbar .small{width:11px;height:11px}
.info{position:absolute;left:39px;top:16px;display:flex;flex-direction:column;color:#f0f0f0}
.navbtns{position:absolute;right:115px;top:58px;display:flex;flex-direction:column;gap:3px}
.navbtns button{width:12px;height:12px;border-radius:6px;background:#292929}
.navbtns svg{width:9px;height:9px}

.redo{position:absolute;left:32px;bottom:3px;width:139px;background:#222;padding:0 4px 4px 5px;color:#bdbdbd;border-radius:1px}
.redo h2{display:flex;align-items:center;gap:3px;height:10px}
.fields{display:grid;grid-template-columns:60px 1fr;column-gap:4px;margin-top:5px}
.fields label{text-align:right}
.num{height:10px;background:#545454;text-align:center;color:#e0e0e0}
.top{border-radius:2px 2px 0 0;border-bottom:1px solid #484848}
.bottom{border-radius:0 0 2px 2px}
.gap{margin-top:1px}
.selwrap{display:flex;align-items:center;background:#2a2a2a;height:10px;min-width:0;padding:0 1px;border-radius:2px;color:#ddd}
.selwrap select{flex:1;padding-left:2px}
.prop{display:flex;align-items:center;justify-content:flex-end;gap:4px;margin-top:1px}

.sidebar{position:absolute;right:1px;top:12px;bottom:0;display:flex}
.npanel{width:99px;align-self:flex-start;background:#3a3a3a;padding:0 5px 3px 4px}
.npanel h2{display:flex;align-items:center;gap:3px;height:13px;color:#e8e8e8}
.card{background:#2c2c2c;border-radius:2px;padding:1px 2px 2px;color:#e0e0e0;margin-top:4px;display:flex;flex-direction:column}
.card h3,.card p{height:10px;padding-left:3px}
.c1{gap:1px;margin-top:5px}
.c2{gap:4px}
.btn{width:100%;height:10px;background:#575757;border-radius:2px;color:#e0e0e0}
.btn.top,.fld.top{border-radius:2px 2px 0 0}
.btn.bottom,.fld.bottom{border-radius:0 0 2px 2px}
.btn:disabled{background:#3c3c3c;color:#7d7d7d}
.chk{display:flex;align-items:center;gap:3px;height:10px;padding-left:1px}
.fld{display:flex;justify-content:space-between;align-items:center;height:10px;background:#575757;padding:0 4px;border-radius:2px;min-width:0}
.fld.in{padding:0 7px}
.fld label{white-space:nowrap}
.fld input{width:16px;text-align:right}
.fill1{background:linear-gradient(90deg,#4a76c4 4%,#4e4e4e 4%)}
.fill2{background:linear-gradient(90deg,#4a76c4 40%,#505050 40%)}
.two{display:grid;grid-template-columns:1fr 1fr;gap:5px}
.line{display:grid;grid-template-columns:19px 1fr;padding-left:3px}
.line label{white-space:nowrap}
.txt{background:#1b1b1b;height:10px;padding-left:3px}
.ntabs{width:9px;background:#262626;display:flex;flex-direction:column;padding-top:2px;gap:1px}
.ntabs button{writing-mode:vertical-rl;transform:rotate(180deg);background:#2b2b2b;border-radius:2px 0 0 2px;width:9px}
.ntabs .on{background:#484848;color:#fff}
.s{height:17px}.l{height:48px}.m{height:26px}.p{height:21px}

.timeline{height:49px;flex:none;display:flex;flex-direction:column;background:#2b2b2b}
.tlhead{height:12px;background:#3a3a3a;display:grid;grid-template-columns:1fr auto 1fr;align-items:center;padding:0 10px 0 6px}
.tlhead>.grp:first-child .pick{margin-right:1px;background:#333}
.tlhead .textmenu{margin-left:3px}
.play{gap:3px;margin-right:8px}
.play svg{width:7px;height:7px}
.play .tiny{border-radius:1px}
.flip svg{transform:scaleX(-1)}
.frames{justify-self:end;gap:3px}
.frames .num{width:36px;height:10px}
.frames .fld{width:43px}
.tlbody{flex:1;display:flex;flex-direction:column}
.ruler{height:12px;display:flex;padding:0 13px 0 8px;line-height:12px;color:#a5a5a5}
.ruler span{flex:1 1 0;display:flex;justify-content:center;min-width:0}
.track{position:relative;height:20px;margin:0 13px 0 8px;background:#343434;box-shadow:-8px 0 #343434,13px 0 #343434}
.range{height:100%;background:#424242}
.ticks{position:absolute;inset:0;background:linear-gradient(90deg,transparent 50%,#363636 50%,#363636 calc(50% + 1px),transparent calc(50% + 1px)) 0 0/calc(100%/57) 100%}
.playhead{position:absolute;top:-11px;bottom:0;width:12px;margin-left:-6px;background:linear-gradient(#4a6cab,#4a6cab) center/2px 100% no-repeat}
.playhead b{display:block;height:10px;background:#4a76c4;border-radius:2px;text-align:center;font-weight:400;color:#fff}
.hscroll{height:4px;margin:0 4px;background:#646464;border-radius:2px}

.right{display:grid;grid-template-rows:214px minmax(0,1fr);gap:1px;min-width:0;min-height:0}
.outliner{display:flex;flex-direction:column;min-height:0}
.ohead{height:13px;background:#3c3c3c;display:flex;align-items:center;padding:0 4px;gap:2px;flex:none}
.find{width:57px;height:10px;background:#1b1b1b;display:flex;align-items:center;margin-left:34px;padding-left:1px}
.find input{flex:1}
.last{margin-left:auto}
.tree{flex:1;list-style:none;background:repeating-linear-gradient(#2a2a2a 0 10px,#272727 10px 20px)}
.tree li{height:10px;display:flex;align-items:center;padding-right:5px}
.tree .arrow{margin:0 3px}
.d0{padding-left:10px;gap:3px}
.d1{padding-left:9px}
.d1 .white{margin-left:2px}
.d1 .ic{margin:0 3px}
.d2{padding-left:20px}
.ob{color:#e39a5f;margin:0 3px 0 0;width:9px}
.data{color:#1fb183;margin-left:8px}
.eye{width:8px;height:8px;margin-left:auto}
.off{opacity:.45}
.sel{background:#3b5689}
.sel span{color:#f0a46a}
.sel .ob{background:#7d7078;border-radius:1px}
.sel .data{color:#2ac7d0}
.properties{display:flex;flex-direction:column;background:#3a3a3a;min-height:0}
.phead{height:12px;background:#3a3a3a;display:flex;align-items:center;padding:0 4px;gap:4px;flex:none}
.crumb2{margin-left:10px}
.pin{margin-left:auto;color:#999}
.pmain{flex:1;display:grid;grid-template-columns:14px minmax(0,1fr);min-height:0}
.ptabs{background:#222;display:flex;flex-direction:column;gap:4px;padding-top:3px}
.ptabs button{width:14px;height:14px;background:#2d2d2d;color:#ccc}
.ptabs svg{width:9px;height:9px}
.ptabs .red{color:#c25c68}.ptabs .or{color:#e38e42}.ptabs .bl{color:#6388c4}.ptabs .gr{color:#1fb183}
.ptabs .on{background:#424242}
.pbody{background:#424242;font-family:"DejaVu Sans",sans-serif}
.pbody input,.pbody p,.unfold{font-family:"Noto Sans",sans-serif}
.namerow{display:flex;background:#3a3a3a;padding:4px 4px 5px}
.namerow .pick{width:16px}
.namerow input{flex:1;height:10px;background:#1f1f1f;padding-left:3px}
.pbody h2{height:12px;display:flex;align-items:center;gap:3px;padding:0 5px 0 4px;color:#c6c6c6}
.listwrap{background:#3a3a3a;padding:4px 4px 5px;display:flex;gap:5px}
.list{flex:1;height:39px;background:#2d2d2d;border-radius:2px;display:grid;grid-template-columns:1fr auto 1fr;align-items:end;padding:0 5px 3px}
.list .grip{margin:0}
.side{display:flex;flex-direction:column}
.side button{width:10px;height:10px;background:#575757}
.side .minus{background:#484848;color:#888}
.side .more{margin-top:3px;background:#2f2f2f;border-radius:2px}
.paper{background:#3a3a3a;padding:3px 4px 4px;display:flex;flex-direction:column;gap:3px}
.unfold{height:10px;background:#575757;justify-content:flex-start;padding-left:1px}
.unfold span{flex:1;text-align:center}
.paper p{height:14px;line-height:14px;background:#2d2d2d;padding-left:6px;border-radius:2px}

.status{height:11px;flex:none;background:#2d2d2d;color:#aaa;display:grid;grid-template-columns:129px 129px 1fr auto;align-items:center;padding:0 15px 0 4px}
.hints{display:flex;gap:4px}
.hints span{display:flex;align-items:center;gap:4px;white-space:nowrap}
.hints .ic{width:8px;height:8px}
.stats{font:5px/10px "DejaVu Sans",sans-serif;color:#b8b8b8}
.flipx{transform:scaleX(-1)}
.wallpaper{height:20px;flex:none;background:linear-gradient(90deg,#a39084,#97867a 35%,#917e70 70%,#8b735d)}
```
